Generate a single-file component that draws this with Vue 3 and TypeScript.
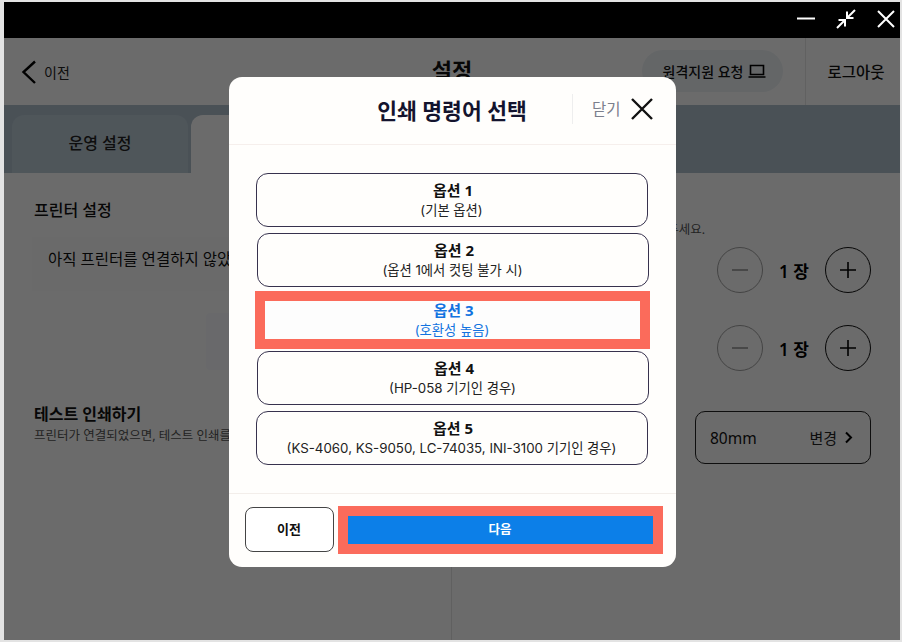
<script setup lang="ts">
interface PrintOption {
  title: string
  note: string
  selected?: boolean
  shifted?: boolean
}

const options: PrintOption[] = [
  { title: '옵션 1', note: '(기본 옵션)' },
  { title: '옵션 2', note: '(옵션 1에서 컷팅 불가 시)', shifted: true },
  { title: '옵션 3', note: '(호환성 높음)', selected: true },
  { title: '옵션 4', note: '(HP-058 기기인 경우)', shifted: true },
  { title: '옵션 5', note: '(KS-4060, KS-9050, LC-74035, INI-3100 기기인 경우)' },
]
</script>

<template>
  <div class="page">
    <div class="window">
      <div class="titlebar">
        <svg class="win-icon" width="20" height="20" viewBox="0 0 20 20"><path d="M1 9.5H19" /></svg>
        <svg class="win-icon" width="20" height="20" viewBox="0 0 20 20">
          <path d="M19 1 11 9M11 2.5V9H17.5M1 19 9 11M2.5 11H9V17.5" />
        </svg>
        <svg class="win-icon" width="20" height="20" viewBox="0 0 20 20"><path d="M2 2 18 18M18 2 2 18" /></svg>
      </div>

      <div class="app">
        <header class="app-header">
          <div class="back">
            <svg width="16" height="24" viewBox="0 0 16 24"><path d="M14 1.5 2.5 12 14 23" /></svg>
            <span>이전</span>
          </div>
          <div class="app-title">설정</div>
          <div class="header-right">
            <div class="pill">
              <span>원격지원 요청</span>
              <svg width="18" height="15" viewBox="0 0 18 15"><path d="M2.5 1.5H15.5V10.5H2.5ZM0.5 13H17.5" /></svg>
            </div>
            <div class="logout">로그아웃</div>
          </div>
        </header>

        <nav class="tabs">
          <div class="tab">운영 설정</div>
          <div class="tab active">인쇄 설정</div>
        </nav>

        <main class="content">
          <section class="col left">
            <h3 class="heading">프린터 설정</h3>
            <div class="notice">아직 프린터를 연결하지 않았습니다.</div>
            <div class="connect-row"><div class="connect"></div></div>
            <h3 class="heading test">테스트 인쇄하기</h3>
            <p class="desc">프린터가 연결되었으면, 테스트 인쇄를 해보세요.</p>
          </section>
          <section class="col right">
            <p class="desc right-desc">영수증 출력 매수를 원하는 대로 설정해 두세요.</p>
            <div class="stepper first">
              <span class="circle off"><svg width="18" height="18" viewBox="0 0 18 18"><path d="M1 9H17" /></svg></span>
              <span class="count">1 장</span>
              <span class="circle"><svg width="18" height="18" viewBox="0 0 18 18"><path d="M1 9H17M9 1V17" /></svg></span>
            </div>
            <div class="stepper">
              <span class="circle off"><svg width="18" height="18" viewBox="0 0 18 18"><path d="M1 9H17" /></svg></span>
              <span class="count">1 장</span>
              <span class="circle"><svg width="18" height="18" viewBox="0 0 18 18"><path d="M1 9H17M9 1V17" /></svg></span>
            </div>
            <div class="paper">
              <span class="paper-size">80mm</span>
              <span class="paper-change">변경
                <svg width="9" height="13" viewBox="0 0 9 13"><path d="M2 1.5 7 6.5 2 11.5" /></svg>
              </span>
            </div>
          </section>
        </main>

        <div class="overlay">
          <div class="modal">
            <div class="modal-head">
              <span></span>
              <h2 class="modal-title">인쇄 명령어 선택</h2>
              <div class="close">
                <span class="close-label">닫기</span>
                <svg width="24" height="24" viewBox="0 0 24 24"><path d="M2 2 22 22M22 2 2 22" /></svg>
              </div>
            </div>

            <div class="modal-body">
              <div
                v-for="option in options"
                :key="option.title"
                class="option"
                :class="{ selected: option.selected, shifted: option.shifted }"
              >
                <strong>{{ option.title }}</strong>
                <span>{{ option.note }}</span>
              </div>
            </div>

            <div class="modal-foot">
              <button class="btn-prev" type="button">이전</button>
              <button class="btn-next" type="button">다음</button>
            </div>
          </div>
        </div>
      </div>
    </div>
  </div>
</template>

<style>
html, body { margin: 0; background: #e3e3e3; }
</style>

<style scoped>
* { box-sizing: border-box; }
.page {
  width: 902px;
  height: 642px;
  padding: 2px 2px 2px 4px;
  background: #e3e3e3;
  font-family: "Noto Sans", "Noto Sans CJK KR", sans-serif;
  color: #111;
  overflow: hidden;
}
.window { height: 638px; display: flex; flex-direction: column; }
.titlebar {
  flex: none;
  height: 36px;
  background: #000;
  display: flex;
  align-items: center;
  justify-content: flex-end;
  gap: 20px;
  padding: 0 4px 2px 0;
}
.win-icon { fill: none; stroke: #fff; stroke-width: 2; }
.app { position: relative; flex: 1; display: flex; flex-direction: column; background: #fff; min-height: 0; }
.app-header {
  flex: none;
  height: 67px;
  display: grid;
  grid-template-columns: 1fr auto 1fr;
  align-items: center;
  background: #fff;
}
.back { display: flex; align-items: center; gap: 7px; padding-left: 17px; font-size: 14px; color: #222; }
.back svg { fill: none; stroke: #000; stroke-width: 2.4; }
.app-title { font-size: 22px; font-weight: 700; margin-top: -5px; }
.header-right { display: flex; align-items: center; justify-content: flex-end; height: 100%; }
.pill {
  display: flex;
  align-items: center;
  gap: 5px;
  height: 42px;
  width: 141px;
  margin-top: -1px;
  justify-content: center;
  padding-left: 4px;
  border-radius: 21px;
  background: #eef3f6;
  font-size: 14px;
  font-weight: 500;
  margin-right: 22px;
}
.pill svg { fill: none; stroke: #000; stroke-width: 1.6; }
.logout {
  width: 95px;
  height: 100%;
  border-left: 1px solid #e8e8e8;
  display: flex;
  align-items: center;
  justify-content: center;
  padding-left: 6px;
  font-size: 15.5px;
  font-weight: 500;
}
.tabs {
  flex: none;
  height: 68px;
  background: #b0c1cd;
  display: flex;
  align-items: flex-end;
  gap: 3px;
  padding-left: 8px;
}
.tab {
  width: 176px;
  height: 58px;
  border-radius: 12px 12px 0 0;
  background: #bcccd7;
  display: flex;
  align-items: center;
  justify-content: center;
  padding-bottom: 5px;
  font-size: 16px;
  font-weight: 500;
  color: #222;
}
.tab.active { background: #fff; }
.content { flex: 1; display: grid; grid-template-columns: 448px 448px; min-height: 0; }
.col { min-width: 0; display: flex; flex-direction: column; }
.left { padding: 26px 0 0 30px; border-right: 1px solid #e4e4e4; overflow: hidden; }
.heading { margin: 0; font-size: 16px; font-weight: 500; line-height: 22px; color: #111; }
.notice {
  margin: 16px 24px 0 -2px;
  height: 54px;
  padding: 10px 0 0 16px;
  font-size: 15.5px;
  line-height: 24px;
  background: #fdfdfd;
  white-space: nowrap;
}
.connect-row { height: 60px; display: flex; justify-content: flex-end; margin-top: 22px; }
.connect { width: 145px; height: 57px; margin-right: 100px; background: #fafbff; border-radius: 4px; }
.heading.test { margin-top: 30px; font-weight: 600; }
.desc { margin: 2px 0 0; font-size: 12.5px; line-height: 18px; color: #555; white-space: nowrap; }
.right { padding: 0 29px 0 0; align-items: flex-end; }
.right-desc { margin-top: 48px; margin-right: 166px; }
.stepper { display: flex; align-items: center; height: 46px; gap: 16px; color: #000; }
.stepper.first { margin-top: 8px; margin-bottom: 32px; }
.circle {
  width: 46px;
  height: 46px;
  border-radius: 50%;
  border: 1.5px solid #111;
  display: flex;
  align-items: center;
  justify-content: center;
}
.circle svg { fill: none; stroke: #000; stroke-width: 1.6; }
.circle.off { border-color: #555; border-width: 1px; opacity: .55; }
.circle.off svg { stroke: #444; }
.count { font-size: 17px; font-weight: 600; width: 30px; white-space: nowrap; }
.paper {
  margin-top: 40px;
  width: 176px;
  height: 53px;
  border: 1.5px solid #222;
  border-radius: 10px;
  display: flex;
  align-items: center;
  justify-content: space-between;
  padding: 0 17px 0 14px;
}
.paper-size { font-size: 15.5px; color: #111; }
.paper-change { display: flex; align-items: center; gap: 7px; font-size: 15px; color: #222; }
.paper-change svg { fill: none; stroke: #000; stroke-width: 2; }

.overlay {
  position: absolute;
  inset: 0;
  background: rgba(0, 0, 0, .58);
  display: flex;
  justify-content: center;
  align-items: flex-start;
  padding-top: 39px;
}
.modal {
  width: 447px;
  height: 490px;
  background: #fffefc;
  border-radius: 13px;
  display: flex;
  flex-direction: column;
  overflow: hidden;
}
.modal-head {
  flex: none;
  height: 68px;
  border-bottom: 1px solid #f6efec;
  display: grid;
  grid-template-columns: 1fr auto 1fr;
  align-items: center;
  padding-bottom: 3px;
}
.modal-title { margin: 0; font-size: 21.5px; font-weight: 700; color: #14142e; white-space: nowrap; }
.close { display: flex; justify-content: flex-end; align-items: center; height: 30px; padding-right: 22px; }
.close-label {
  font-size: 15.5px;
  color: #7b7f8c;
  margin-right: 9px;
  padding-left: 19px;
  border-left: 1px solid #eeeeee;
  line-height: 30px;
}
.close svg { fill: none; stroke: #111; stroke-width: 2.4; }
.modal-body {
  flex: 1;
  display: flex;
  flex-direction: column;
  padding: 28px 28px 0 27px;
}
.option {
  flex: none;
  height: 54px;
  margin-bottom: 6px;
  border: 1.5px solid #37324e;
  border-radius: 12px;
  background: #fffefc;
  display: flex;
  flex-direction: column;
  align-items: center;
  justify-content: center;
}
.option.shifted { margin-left: 1px; margin-right: -1px; }
.option strong { font-size: 15px; font-weight: 700; line-height: 20px; color: #111; padding-left: 3px; }
.option span {
  font-family: Inter, "Noto Sans CJK KR", sans-serif;
  font-size: 13.3px;
  line-height: 20px;
  color: #222;
  white-space: nowrap;
}
.option.selected {
  height: 58px;
  margin: -2px -2px 2px -1px;
  border: 10px solid #fb6b5b;
  border-radius: 0;
  background: #fdfdfd;
}
.option.selected strong, .option.selected span { color: #1273e0; }
.modal-foot {
  flex: none;
  height: 74px;
  border-top: 1px solid #f3eeea;
  display: flex;
  align-items: center;
  gap: 4px;
  padding: 0 13px 2px 16px;
}
.btn-prev, .btn-next { font-family: inherit; cursor: pointer; }
.btn-prev {
  width: 89px;
  height: 45px;
  border: 1.5px solid #444;
  border-radius: 8px;
  background: #fff;
  font-size: 13px;
  font-weight: 700;
  color: #111;
  padding: 0 0 2px;
}
.btn-next {
  flex: 1;
  height: 48px;
  border: 10px solid #fb6b5b;
  background: #0c7fe8;
  color: #fff;
  font-size: 12.5px;
  font-weight: 700;
  padding: 0 0 2px;
}
</style>
